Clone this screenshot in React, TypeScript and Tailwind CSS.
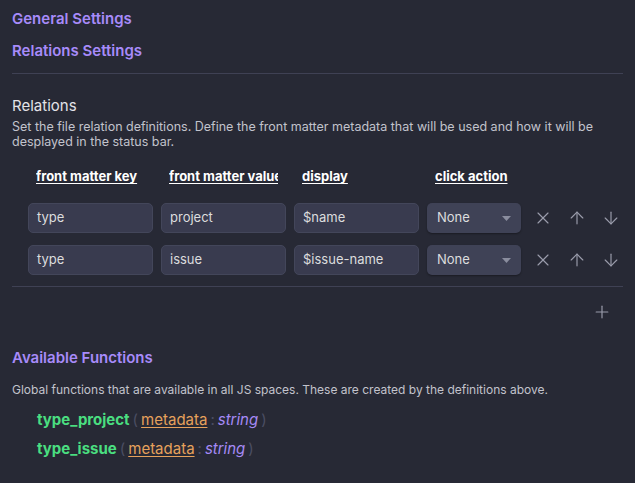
import { X, ArrowUp, ArrowDown, Plus } from "lucide-react";

const rows = [
  { key: "type", value: "project", display: "$name" },
  { key: "type", value: "issue", display: "$issue-name" },
];

const headers = ["front matter key", "front matter value", "display", "click action"];

const fns = ["type_project", "type_issue"];

function Field({ value }: { value: string }) {
  return (
    <div className="shrink-0 w-[125px] h-[30px] rounded-[5px] bg-[#393b4f] border border-[#43465a] px-2 flex items-center text-[13px] text-[#dcddde]">
      {value}
    </div>
  );
}

export default function App() {
  return (
    <div
      className="w-[635px] h-[483px] overflow-hidden bg-[#272935] text-[#dcddde]"
      style={{ fontFamily: "Inter, 'Noto Sans', sans-serif" }}
    >
      <div className="px-3">
        {/* Section titles */}
        <h2 className="pt-[10px] text-[15px] font-semibold text-[#a78bfa] leading-[18px]">General Settings</h2>
        <h2 className="mt-[14px] text-[15px] font-semibold text-[#a78bfa] leading-[18px]">Relations Settings</h2>
        <div className="mt-[13px] h-px bg-[#3f4154]" />

        {/* Relations heading */}
        <div className="mt-[22px] text-[15px] leading-[20px] text-[#e3e3e8]">Relations</div>
        <p className="mt-[3px] text-[12.5px] leading-[15px] text-[#c2c3cc]">
          Set the file relation definitions. Define the front matter metadata that will be used and how it will be
          desplayed in the status bar.
        </p>

        {/* Table */}
        <div className="mt-[19px] pl-4 flex flex-col">
          <div className="flex gap-2 h-[18px] items-center">
            {headers.map((h, i) => (
              <div key={h} className={(i === 3 ? "w-[94px]" : "w-[125px]") + " shrink-0 px-2"}>
                <div className="overflow-hidden whitespace-nowrap text-[13px] font-bold underline underline-offset-2 text-white">
                  {h}
                </div>
              </div>
            ))}
          </div>
          <div className="mt-[17px] flex flex-col gap-[12px]">
            {rows.map((r, i) => (
              <div key={i} className="flex items-center gap-2">
                <Field value={r.key} />
                <Field value={r.value} />
                <Field value={r.display} />
                <div className="shrink-0 w-[94px] h-[30px] rounded-[5px] bg-[#3f4256] shadow-[0_1px_2px_rgba(0,0,0,0.35)] px-[10px] flex items-center justify-between text-[13px] text-[#dcddde]">
                  <span>None</span>
                  <svg width="9" height="5" viewBox="0 0 9 5">
                    <path d="M0 0h9L4.5 5z" fill="#8a8d9e" />
                  </svg>
                </div>
                <div className="ml-[4px] flex items-center gap-[14px] text-[#9a9cab]">
                  <X size={20} strokeWidth={1.4} />
                  <ArrowUp size={20} strokeWidth={1.4} />
                  <ArrowDown size={20} strokeWidth={1.4} />
                </div>
              </div>
            ))}
          </div>
        </div>

        <div className="mt-[11px] h-px bg-[#3f4154]" />
        <div className="mt-[15px] flex justify-end pr-[11px] text-[#9a9cab]">
          <Plus size={20} strokeWidth={1.4} />
        </div>

        {/* Available functions */}
        <h2 className="mt-[27px] text-[15px] font-semibold text-[#a78bfa] leading-[18px]">Available Functions</h2>
        <p className="mt-[15px] text-[12px] leading-[15px] text-[#c2c3cc]">
          Global functions that are available in all JS spaces. These are created by the definitions above.
        </p>
        <div className="mt-[13px] pl-[25px] flex flex-col gap-[10px]">
          {fns.map((f) => (
            <div key={f} className="flex items-baseline text-[15px] leading-[19px]">
              <span className="font-bold text-[#4ade80]">{f}</span>
              <span className="mx-[3px] text-[#4b4e63]">(</span>
              <span className="text-[#e6a15c] underline underline-offset-2">metadata</span>
              <span className="mx-[3px] text-[#4b4e63]">:</span>
              <span className="italic text-[#a58af5]">string</span>
              <span className="mx-[3px] text-[#4b4e63]">)</span>
            </div>
          ))}
        </div>
      </div>
    </div>
  );
}
